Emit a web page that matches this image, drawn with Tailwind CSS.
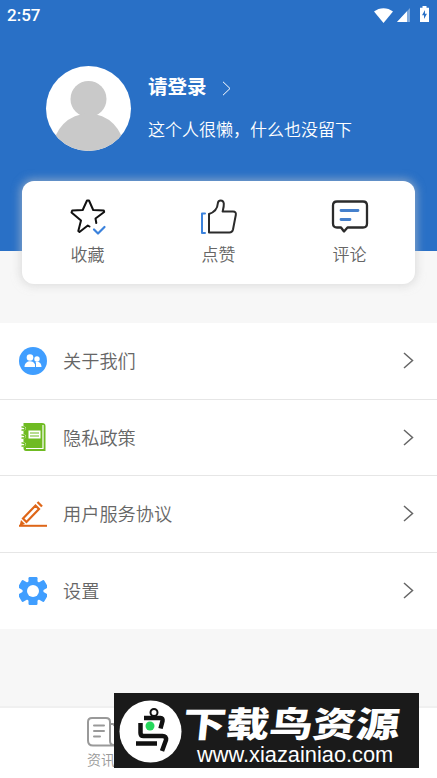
<!DOCTYPE html>
<html lang="zh-CN">
<head>
  <meta charset="UTF-8" />
  <meta name="viewport" content="width=device-width, initial-scale=1.0" />
  <title>我的</title>
  <script src="https://cdn.jsdelivr.net/npm/@tailwindcss/browser@4"></script>
</head>
<body class="relative flex flex-col w-[437px] h-[778px] overflow-hidden bg-[#f7f7f7] font-[Roboto,'Noto_Sans_CJK_SC',sans-serif] font-[350] text-[#666]">

  <!-- Header -->
  <header class="h-[251px] shrink-0 bg-[#2970c6] text-white">
    <div class="flex h-[30px] items-center pl-[7px] pr-[8px]">
      <span class="text-[17px] leading-none font-medium">2:57</span>
      <svg class="ml-auto w-[19px] h-[15px]" viewBox="0 0 19 15" fill="#fff"><path d="M0 3.5C5.5-1 13.5-1 19 3.5L9.5 15z" /></svg>
      <svg class="ml-[4px] w-[13px] h-[14px]" viewBox="0 0 13 14"><path d="M13 0v14H0z" fill="#fff" fill-opacity=".4" /><path d="M10 3.2V14H0z" fill="#fff" /></svg>
      <svg class="ml-[10px] w-[9px] h-[16px] -mt-[2px]" viewBox="0 0 9 16"><path d="M2.5 0h4v1.700H9V16H0V1.700h2.500z" fill="#fff" /><path d="M5 4L2 9.200h2V13l3-5.200H5z" fill="#2970c6" /></svg>
    </div>

    <div class="flex pl-[46px] pt-[36px]">
      <svg class="w-[85px] h-[85px] rounded-full bg-white" viewBox="0 0 85 85" fill="#c9c9c9">
        <circle cx="42.500" cy="33" r="18" />
        <circle cx="42.500" cy="83" r="35.500" />
      </svg>
      <div class="ml-[17px]">
        <div class="mt-[8px] flex h-[28px] items-center">
          <span class="text-[19.500px] leading-none font-bold">请登录</span>
          <svg class="ml-[15px] w-[9px] h-[15px]" viewBox="0 0 9 15" fill="none" stroke="#fff" stroke-width="1"><path d="M1 .8l7 6.700-7 6.700" /></svg>
        </div>
        <p class="mt-[14px] text-[17px] leading-[28px] whitespace-nowrap">这个人很懒，什么也没留下</p>
      </div>
    </div>
  </header>

  <!-- Quick actions -->
  <section class="relative z-10 mx-[22px] -mt-[70px] grid h-[103px] shrink-0 grid-cols-3 rounded-[12px] bg-white shadow-[0_0_8px_2px_rgba(200,200,200,0.55)]">
    <div class="flex flex-col items-center pt-[17px]">
      <svg class="w-[38px] h-[38px]" viewBox="0 0 38 38" fill="none" stroke-linecap="round" stroke-linejoin="round">
        <path d="M20.500 28.500L18.800 27.500 10.500 34 9.300 33 12 22.500 2.500 14.500 3.200 12.500 13.700 12 18 2.500H20L24.200 12 34.800 12.500 35.200 14 26.500 20.500 27.300 25" stroke="#111" stroke-width="2" />
        <path d="M25 31.500l4 4 6.500-6.500" stroke="#3b82dc" stroke-width="2.200" />
      </svg>
      <span class="mt-[5px] text-[17px] leading-[28px]">收藏</span>
    </div>
    <div class="flex flex-col items-center pt-[17px]">
      <svg class="w-[38px] h-[38px]" viewBox="0 0 38 38" fill="none" stroke-linecap="round" stroke-linejoin="round" stroke-width="2">
        <path d="M5 15.500H2v19.500h3" stroke="#3b82dc" />
        <path d="M9 34.500V16C15 14 17.500 10.500 17.800 5.500c.3-4 5.500-4 6 0 .2 3-.5 5-1.200 8H33c2.500 0 3.200 1.500 2.800 3.500L33 31.500c-.5 2-1.500 3-3.500 3z" stroke="#2b2b2b" />
      </svg>
      <span class="mt-[5px] text-[17px] leading-[28px]">点赞</span>
    </div>
    <div class="flex flex-col items-center pt-[17px]">
      <svg class="w-[38px] h-[38px]" viewBox="0 0 38 38" fill="none" stroke-linecap="round" stroke-linejoin="round">
        <path d="M6 3.500H32q4 0 4 4V25.500q0 4-4 4H16.500l-3.500 4-3-4H6q-4 0-4-4V7.500q0-4 4-4z" stroke="#2b2b2b" stroke-width="2.300" />
        <path d="M10 12.500h17M10 21.500h9" stroke="#4580cc" stroke-width="2.800" />
      </svg>
      <span class="mt-[5px] text-[17px] leading-[28px]">评论</span>
    </div>
  </section>

  <!-- Menu -->
  <nav class="mt-[39px] h-[306px] shrink-0 grid grid-rows-4 divide-y divide-[#e6e6e6] bg-white text-[18.200px]">
    <a class="flex items-center pl-[19px] pr-[23px]">
      <svg class="w-[28px] h-[28px]" viewBox="0 0 28 28">
        <circle cx="14" cy="14" r="14" fill="#409eff" />
        <g fill="#fff"><circle cx="11" cy="10.500" r="3.300" /><circle cx="18" cy="12" r="2.700" /><path d="M5.500 20c0-7 9-7.500 10.500-2.500V20zM17 20v-3c0-1 0-1.300-.5-2 3-.8 6 1 6 5z" /></g>
      </svg>
      <span class="ml-[16px] mt-[2px]">关于我们</span>
      <svg class="ml-auto w-[11px] h-[17px]" viewBox="0 0 11 17" fill="none" stroke="#666" stroke-width="1.500"><path d="M1 1l8.500 7.500L1 16" /></svg>
    </a>
    <a class="flex items-center pl-[19px] pr-[23px]">
      <svg class="w-[28px] h-[30px]" viewBox="0 0 28 30">
        <path d="M4.500 1H23q3.500 0 3.500 3V29H7q-2.500 0-2.500-3z" fill="#6fbb22" />
        <path d="M24 3v23.500H7" fill="none" stroke="#fff" stroke-width="1.200" />
        <path d="M9.500 8.500H21.500v8H9.500z" fill="#fff" />
        <path d="M11 11h9M11 14h9" stroke="#6fbb22" stroke-width="1.200" />
        <path d="M2 6.500h3M2 14.500h3M2 22.500h3" stroke="#fff" stroke-width="4" stroke-linecap="round" />
        <path d="M2.500 5q3-.5 3.500 1.500t-3.500 1.500M2.500 13q3-.5 3.500 1.500t-3.500 1.500M2.500 21q3-.5 3.500 1.500t-3.500 1.500" fill="none" stroke="#6fbb22" stroke-width="1.500" />
      </svg>
      <span class="ml-[16px] mt-[2px]">隐私政策</span>
      <svg class="ml-auto w-[11px] h-[17px]" viewBox="0 0 11 17" fill="none" stroke="#666" stroke-width="1.500"><path d="M1 1l8.500 7.500L1 16" /></svg>
    </a>
    <a class="flex items-center pl-[19px] pr-[23px]">
      <svg class="w-[28px] h-[28px]" viewBox="0 0 28 28" fill="none" stroke="#de6618">
        <path d="M0 25.800H28" stroke-width="2" />
        <path d="M4 18.500L16.500 5.500 20 9 7.500 22z" stroke-width="2.200" />
        <path d="M18.500 2l4.500 4.500" stroke-width="2.300" />
        <path d="M2 20l4 4-5.500 2z" fill="#de6618" stroke="none" />
      </svg>
      <span class="ml-[16px] mt-[2px]">用户服务协议</span>
      <svg class="ml-auto w-[11px] h-[17px]" viewBox="0 0 11 17" fill="none" stroke="#666" stroke-width="1.500"><path d="M1 1l8.500 7.500L1 16" /></svg>
    </a>
    <a class="flex items-center pl-[19px] pr-[23px]">
      <svg class="w-[28px] h-[28px]" viewBox="0 0 28 28" fill="#409eff">
        <circle cx="14" cy="14" r="10.500" />
        <rect x="9.500" width="9" height="28" rx="1.200" />
        <rect x="9.500" y="-1" width="9" height="30" rx="1.200" transform="rotate(60 14 14)" />
        <rect x="9.500" y="-1" width="9" height="30" rx="1.200" transform="rotate(120 14 14)" />
        <circle cx="14" cy="14" r="6" fill="#fff" />
      </svg>
      <span class="ml-[16px] mt-[2px]">设置</span>
      <svg class="ml-auto w-[11px] h-[17px]" viewBox="0 0 11 17" fill="none" stroke="#666" stroke-width="1.500"><path d="M1 1l8.500 7.500L1 16" /></svg>
    </a>
  </nav>

  <!-- Tab bar -->
  <footer class="mt-auto h-[72px] shrink-0 border-t-2 border-[#f0f0f0] bg-white">
    <div class="ml-[86px] flex w-[30px] flex-col items-center pt-[8px] text-[#999]">
      <svg class="w-[30px] h-[31px]" viewBox="0 0 30 31" fill="none" stroke="#999" stroke-width="2" stroke-linecap="round">
        <path d="M29 29.500H7q-5 0-5-5V6q0-4 4-4H20q4 0 4 4v19q0 4 4 4M24 8h3l3 3" />
        <path d="M8 9.500h10M8 15h10M8 20.500h6" />
      </svg>
      <span class="mt-[1px] text-[14px] leading-[24px] whitespace-nowrap">资讯</span>
    </div>
  </footer>

  <!-- Site banner over the tab bar -->
  <aside class="absolute left-[114px] top-[693px] z-20 flex h-[75px] w-[305px] items-center bg-[#1a1a1a] text-white">
    <svg class="ml-[5px] mt-[2px] w-[63px] h-[63px] shrink-0" viewBox="0 0 63 63" fill="none">
      <circle cx="31.500" cy="31.500" r="31" fill="#fff" />
      <circle cx="35" cy="12.500" r="3.500" stroke="#111" stroke-width="2" />
      <path d="M25 18H41.500q2.500 0 2 3l-2 7.500M21.500 23v10q0 3 3 3H43.500q4 0 3.500 4l-4 11M17 43.500H38" stroke="#111" stroke-width="4.500" />
      <circle cx="31" cy="26" r="4.500" fill="#25d85b" />
    </svg>
    <div class="flex flex-col pt-[9px]">
      <svg class="h-[39px] w-[223px] overflow-visible" viewBox="0 0 223 39"><text x="3" y="34" transform="skewX(-6)" textLength="217" lengthAdjust="spacingAndGlyphs" class="font-['Noto_Sans_CJK_SC',sans-serif] text-[35px] font-black" fill="#fff">下载鸟资源</text></svg>
      <span class="ml-[15px] font-['Liberation_Sans',sans-serif] text-[21.800px] leading-[26px] font-normal">www.xiazainiao.com</span>
    </div>
  </aside>

</body>
</html>
